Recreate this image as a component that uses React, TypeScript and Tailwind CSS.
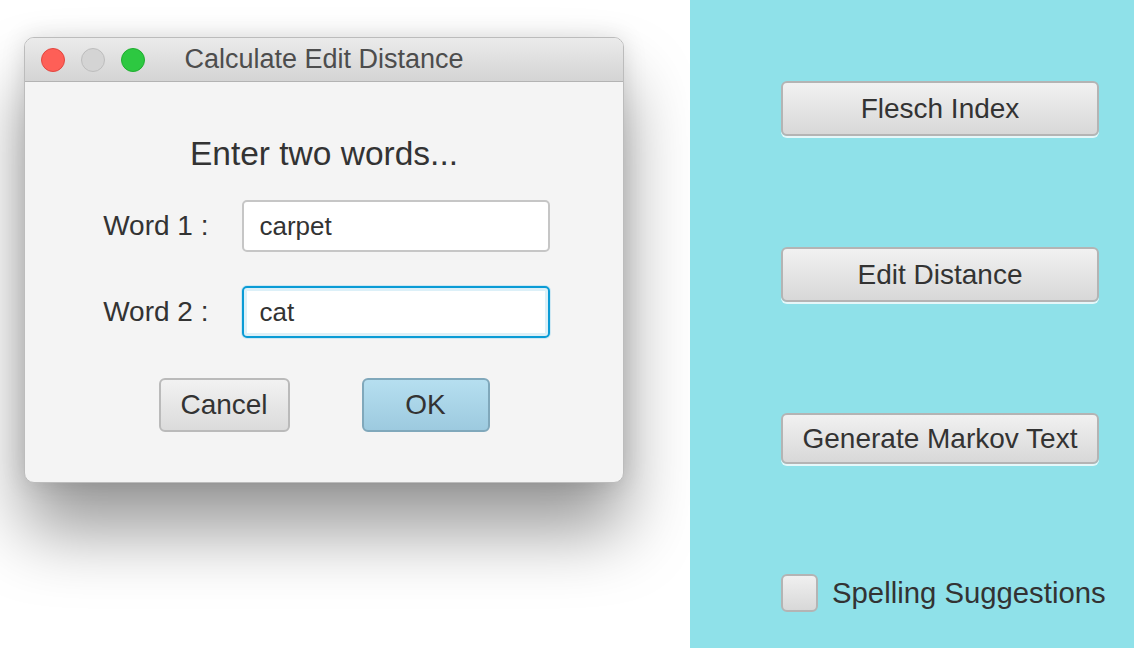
import React from "react";

const FONT = "font-['Liberation_Sans',Arial,sans-serif]";

function TrafficLights() {
  return (
    <div className="flex items-center gap-4 pl-4">
      <span className="h-6 w-6 rounded-full border border-[#e2463f] bg-[#fe5f57]" />
      <span className="h-6 w-6 rounded-full border border-[#bdbdbd] bg-[#d4d4d4]" />
      <span className="h-6 w-6 rounded-full border border-[#1fae2f] bg-[#2dc841]" />
    </div>
  );
}

function Field({ label, value, focused }: { label: string; value: string; focused?: boolean }) {
  return (
    <div className="flex items-center gap-[33px]">
      <span className="w-[110px] text-right text-[28px] leading-none text-[#333]">{label}</span>
      <div
        className={
          focused
            ? "flex h-[52px] w-[308px] items-center rounded-[5px] border-2 border-[#0a9bd5] bg-white pl-4 text-[26px] text-[#333] shadow-[inset_0_0_0_3px_#dcf0f8,0_0_0_1px_#cfe8f3]"
            : "flex h-[52px] w-[308px] items-center rounded-[5px] border-2 border-[#c6c6c6] bg-white pl-4 text-[26px] text-[#333]"
        }
      >
        {value}
      </div>
    </div>
  );
}

function SideButton({ label, tall = true }: { label: string; tall?: boolean }) {
  return (
    <button
      className={`${tall ? "h-[55px]" : "h-[51px]"} w-[318px] rounded-[6px] border-2 border-[#b4b4b4] bg-gradient-to-b from-[#f1f1f1] to-[#d8d8d8] text-[28px] leading-none text-[#333] shadow-[0_2px_0_#e6f7f9]`}
    >
      {label}
    </button>
  );
}

export default function App() {
  return (
    <div className={`flex h-[648px] w-[1134px] overflow-hidden bg-white ${FONT}`}>
      <div className="w-[690px] pl-[24px] pt-[37px]">
        <div className="flex h-[446px] w-[600px] flex-col overflow-hidden rounded-[10px] border border-[#bcbcbc] bg-[#f4f4f4] shadow-[0_48px_70px_rgba(0,0,0,0.4),0_0_24px_rgba(0,0,0,0.12)]">
          <div className="grid h-[44px] grid-cols-[1fr_auto_1fr] items-center border-b border-[#b3b3b3] bg-gradient-to-b from-[#ebebeb] to-[#d4d4d4]">
            <TrafficLights />
            <span className="text-[27px] leading-none text-[#4d4d4d]">Calculate Edit Distance</span>
            <span />
          </div>
          <div className="flex flex-col items-center pt-[56px]">
            <p className="text-[33.5px] leading-[32px] text-[#333]">Enter two words...</p>
            <div className="mt-[30px] flex flex-col gap-[34px]">
              <Field label="Word 1 :" value="carpet" />
              <Field label="Word 2 :" value="cat" focused />
            </div>
            <div className="mt-[40px] flex gap-[72px]">
              <button className="h-[54px] w-[131px] rounded-[6px] border-2 border-[#bababa] bg-gradient-to-b from-[#f2f2f2] to-[#dbdbdb] text-[28px] leading-none text-[#333]">
                Cancel
              </button>
              <button className="h-[54px] w-[128px] rounded-[6px] border-2 border-[#80a8bb] bg-gradient-to-b from-[#b6dff0] to-[#9dcadf] text-[28px] leading-none text-[#333]">
                OK
              </button>
            </div>
          </div>
        </div>
      </div>
      <div className="flex flex-1 flex-col items-start bg-[#8fe1e9] pl-[91px] pt-[81px]">
        <SideButton label="Flesch Index" />
        <div className="mt-[111px]">
          <SideButton label="Edit Distance" />
        </div>
        <div className="mt-[111px]">
          <SideButton label="Generate Markov Text" tall={false} />
        </div>
        <label className="mt-[110px] flex items-center gap-[14px]">
          <span className="h-[38px] w-[37px] rounded-[6px] border-2 border-[#b4b4b4] bg-gradient-to-b from-[#f0f0f0] to-[#d8d8d8]" />
          <span className="text-[29.3px] leading-none text-[#333]">Spelling Suggestions</span>
        </label>
      </div>
    </div>
  );
}
